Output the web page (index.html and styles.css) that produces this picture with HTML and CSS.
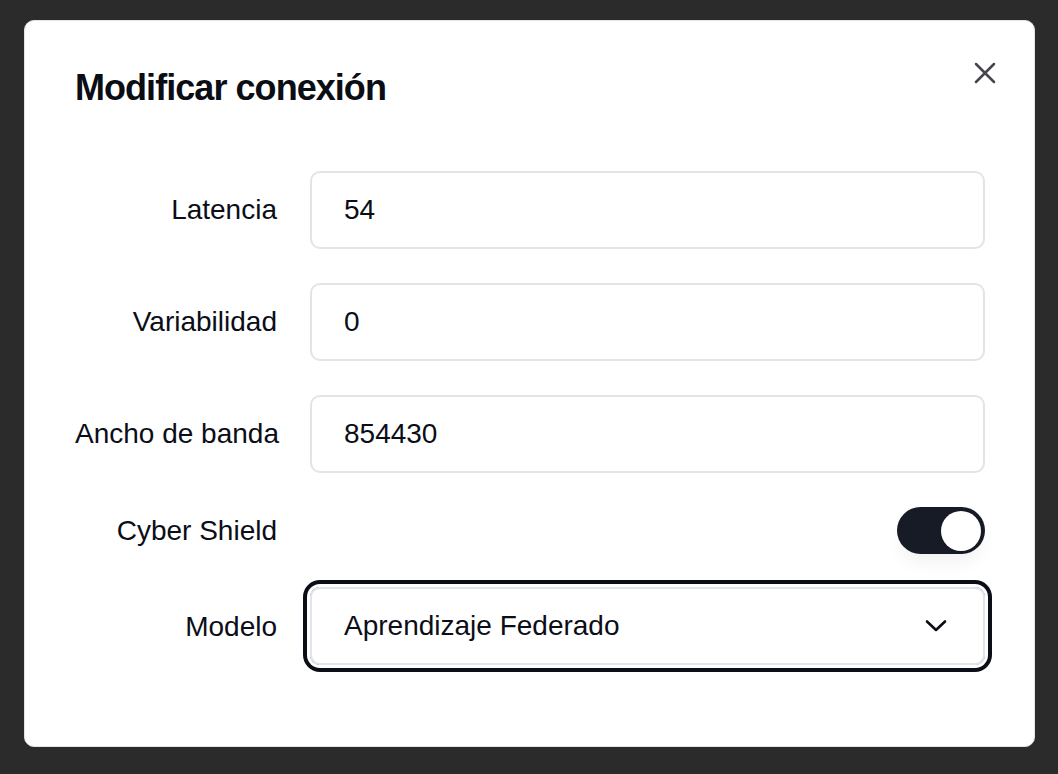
FILE: index.html
```html
<!DOCTYPE html>
<html lang="es">
<head>
<meta charset="utf-8">
<title>Modificar conexión</title>
<link rel="stylesheet" href="styles.css">
</head>
<body>
  <div class="dialog" role="dialog">
    <h2 class="title">Modificar conexión</h2>
    <button class="close" aria-label="Cerrar">
      <svg width="22" height="22" viewBox="0 0 22 22" fill="none" stroke="currentColor" stroke-width="2.5" stroke-linecap="round">
        <path d="M2 2 L20 20 M20 2 L2 20"/>
      </svg>
    </button>
    <form class="form">
      <label class="label" for="lat">Latencia</label>
      <div class="input" id="lat">54</div>

      <label class="label" for="var">Variabilidad</label>
      <div class="input" id="var">0</div>

      <label class="label" for="bw">Ancho de banda</label>
      <div class="input" id="bw">854430</div>

      <label class="label">Cyber Shield</label>
      <div class="switch-cell">
        <span class="switch"><span class="knob"></span></span>
      </div>

      <label class="label">Modelo</label>
      <div class="select">
        <span>Aprendizaje Federado</span>
        <svg width="22" height="14" viewBox="0 0 22 14" fill="none" stroke="currentColor" stroke-width="2.6" stroke-linecap="round" stroke-linejoin="round">
          <path d="M2 2.5 L11 11 L20 2.5"/>
        </svg>
      </div>
    </form>
  </div>
</body>
</html>
```
FILE: styles.css
```css
* { box-sizing: border-box; }

html, body {
  margin: 0;
  padding: 0;
  background: #2b2b2b;
  font-family: "Liberation Sans", Arial, Helvetica, sans-serif;
  color: #0b0e17;
}

body {
  width: 1058px;
  height: 774px;
  padding: 20px 23px 0 24px;
}

.dialog {
  position: relative;
  width: 1011px;
  height: 727px;
  background: #ffffff;
  border: 1px solid #e4e4e8;
  border-radius: 10px;
  padding: 46px 49px 0 50px;
}

.title {
  margin: 0;
  font-size: 36px;
  line-height: 42px;
  font-weight: 700;
  letter-spacing: -0.95px;
  color: #0a0d14;
}

.close {
  position: absolute;
  top: 41px;
  right: 38px;
  width: 22px;
  height: 22px;
  padding: 0;
  border: 0;
  background: none;
  color: #45454d;
  display: flex;
}

.form {
  margin-top: 62px;
  display: grid;
  grid-template-columns: 202px 1fr;
  column-gap: 33px;
  row-gap: 34px;
  align-items: center;
}

.label {
  text-align: right;
  white-space: nowrap;
  font-size: 28px;
  line-height: 32px;
  color: #0b0e17;
}

.input {
  height: 78px;
  border: 2px solid #e3e3e9;
  border-radius: 10px;
  padding: 0 32px;
  display: flex;
  align-items: center;
  font-size: 28px;
  color: #0b0e17;
}

.switch-cell {
  display: flex;
  justify-content: flex-end;
}

.switch {
  width: 88px;
  height: 47px;
  border-radius: 24px;
  background: #161b26;
  display: flex;
  align-items: center;
  justify-content: flex-end;
  padding: 0 4px;
  box-shadow: 0 12px 18px -4px rgba(0, 0, 0, 0.06);
}

.knob {
  width: 40px;
  height: 40px;
  border-radius: 50%;
  background: #ffffff;
  box-shadow: 0 1px 3px rgba(0, 0, 0, 0.15);
}

.select {
  height: 78px;
  margin-top: -1px;
  border: 2px solid #e3e3e9;
  border-radius: 10px;
  padding: 0 36px 0 32px;
  display: flex;
  align-items: center;
  justify-content: space-between;
  font-size: 28px;
  color: #0b0e17;
  box-shadow: 0 0 0 3px #ffffff, 0 0 0 7px #0b0e17;
}

.select svg {
  color: #0b0e17;
}
```
